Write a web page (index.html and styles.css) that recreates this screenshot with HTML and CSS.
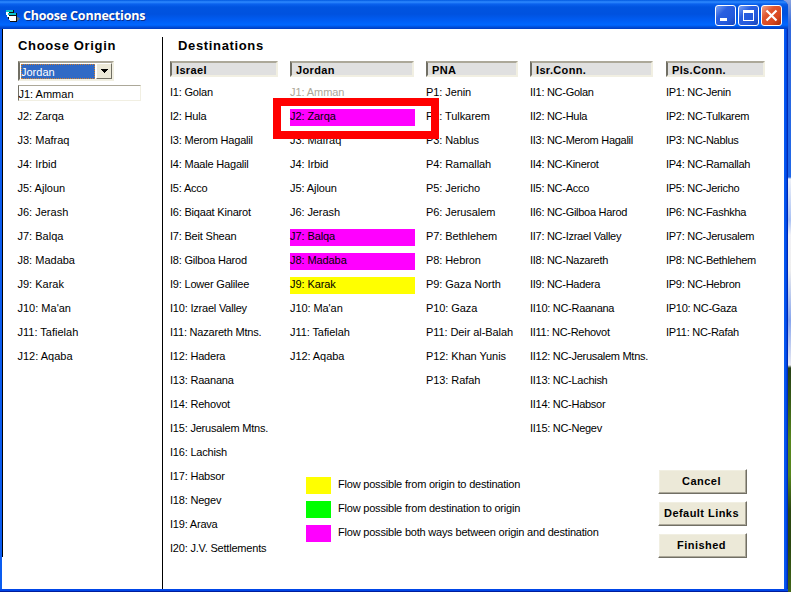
FILE: index.html
```html
<!DOCTYPE html>
<html lang="en">
<head>
<meta charset="utf-8">
<title>Choose Connections</title>
<link rel="stylesheet" href="styles.css">
</head>
<body>
<div class="window">
  <header class="titlebar">
    <svg class="app-icon" width="14" height="14" viewBox="0 0 14 14">
      <path d="M10 7l4 2.500-3 3z" fill="#66727c"/>
      <g shape-rendering="crispEdges">
      <path d="M0 1h8v9H2z" fill="#111"/>
      <path d="M0 1h7v2H0z" fill="#0bc4cc"/>
      <path d="M0 3h3v5H1z" fill="#fff"/>
      <path d="M2 4h9v9H4z" fill="#111"/>
      <path d="M2 4h8v2H2z" fill="#0bc4cc"/>
      <path d="M2 7h8v5H4z" fill="#fff"/>
      </g>
    </svg>
    <h1 class="caption">Choose Connections</h1>
    <div class="controls">
      <button class="ctl" aria-label="Minimize"><svg width="21" height="21" viewBox="0 0 21 21"><path d="M5 13h7v3H5z" fill="#fff"/></svg></button>
      <button class="ctl" aria-label="Maximize"><svg width="21" height="21" viewBox="0 0 21 21"><path fill-rule="evenodd" d="M5 5h11v11H5zM6 8v7h9V8z" fill="#fff"/></svg></button>
      <button class="ctl close" aria-label="Close"><svg width="21" height="21" viewBox="0 0 21 21"><path d="M5.500 5.500l10 10M15.500 5.500l-10 10" stroke="#fff" stroke-width="2.200"/></svg></button>
    </div>
  </header>
  <main class="client">
    <section class="origin">
      <h2 class="heading">Choose Origin</h2>
      <div class="combo"><span class="combo-value">Jordan</span><span class="combo-button"><svg width="7" height="4" viewBox="0 0 7 4" shape-rendering="crispEdges"><path d="M0 0h7L3.500 4z"/></svg></span></div>
      <ul class="list">
        <li class="current">J1: Amman</li><li>J2: Zarqa</li><li>J3: Mafraq</li><li>J4: Irbid</li><li>J5: Ajloun</li><li>J6: Jerash</li><li>J7: Balqa</li><li>J8: Madaba</li><li>J9: Karak</li><li>J10: Ma'an</li><li>J11: Tafielah</li><li>J12: Aqaba</li>
      </ul>
    </section>
    <section class="destinations">
      <h2 class="heading">Destinations</h2>
      <div class="board">
        <div class="column israel">
          <h3 class="head">Israel</h3>
          <ul class="list"><li>I1: Golan</li><li>I2: Hula</li><li>I3: Merom Hagalil</li><li>I4: Maale Hagalil</li><li>I5: Acco</li><li>I6: Biqaat Kinarot</li><li>I7: Beit Shean</li><li>I8: Gilboa Harod</li><li>I9: Lower Galilee</li><li>I10: Izrael Valley</li><li>I11: Nazareth Mtns.</li><li>I12: Hadera</li><li>I13: Raanana</li><li>I14: Rehovot</li><li>I15: Jerusalem Mtns.</li><li>I16: Lachish</li><li>I17: Habsor</li><li>I18: Negev</li><li>I19: Arava</li><li>I20: J.V. Settlements</li></ul>
        </div>
        <div class="column jordan">
          <h3 class="head">Jordan</h3>
          <ul class="list"><li class="disabled">J1: Amman</li><li class="both marked">J2: Zarqa</li><li>J3: Mafraq</li><li>J4: Irbid</li><li>J5: Ajloun</li><li>J6: Jerash</li><li class="both">J7: Balqa</li><li class="both">J8: Madaba</li><li class="outward">J9: Karak</li><li>J10: Ma'an</li><li>J11: Tafielah</li><li>J12: Aqaba</li></ul>
        </div>
        <div class="column">
          <h3 class="head">PNA</h3>
          <ul class="list"><li>P1: Jenin</li><li>P2: Tulkarem</li><li>P3: Nablus</li><li>P4: Ramallah</li><li>P5: Jericho</li><li>P6: Jerusalem</li><li>P7: Bethlehem</li><li>P8: Hebron</li><li>P9: Gaza North</li><li>P10: Gaza</li><li>P11: Deir al-Balah</li><li>P12: Khan Yunis</li><li>P13: Rafah</li></ul>
        </div>
        <div class="column connections">
          <h3 class="head">Isr.Conn.</h3>
          <ul class="list"><li>II1: NC-Golan</li><li>II2: NC-Hula</li><li>II3: NC-Merom Hagalil</li><li>II4: NC-Kinerot</li><li>II5: NC-Acco</li><li>II6: NC-Gilboa Harod</li><li>II7: NC-Izrael Valley</li><li>II8: NC-Nazareth</li><li>II9: NC-Hadera</li><li>II10: NC-Raanana</li><li>II11: NC-Rehovot</li><li>II12: NC-Jerusalem Mtns.</li><li>II13: NC-Lachish</li><li>II14: NC-Habsor</li><li>II15: NC-Negev</li></ul>
        </div>
        <div class="column connections">
          <h3 class="head">Pls.Conn.</h3>
          <ul class="list"><li>IP1: NC-Jenin</li><li>IP2: NC-Tulkarem</li><li>IP3: NC-Nablus</li><li>IP4: NC-Ramallah</li><li>IP5: NC-Jericho</li><li>IP6: NC-Fashkha</li><li>IP7: NC-Jerusalem</li><li>IP8: NC-Bethlehem</li><li>IP9: NC-Hebron</li><li>IP10: NC-Gaza</li><li>IP11: NC-Rafah</li></ul>
        </div>
        <ul class="legend">
          <li><i class="swatch outward"></i>Flow possible from origin to destination</li>
          <li><i class="swatch inward"></i>Flow possible from destination to origin</li>
          <li><i class="swatch both"></i>Flow possible both ways between origin and destination</li>
        </ul>
        <div class="actions"><button>Cancel</button><button>Default Links</button><button>Finished</button></div>
      </div>
    </section>
  </main>
</div>
</body>
</html>
```

FILE: styles.css
```css
*, *::after { box-sizing: border-box; }
body {
  margin: 0;
  height: 592px;
  overflow: hidden;
  font: 11px/14px "Liberation Sans", Arial, sans-serif;
  color: #000;
  background: linear-gradient(#8ba4df 0, #3268dc 25px, #1f67e8 177px, #eef1f8 179px, #a9c1f4 220px, #f1f1f6 235px, #eee 270px, #87a5ed 320px, #e9e9f2 365px, #263f16 368px, #365a15 400px, #56851c 440px, #56851c 475px, #2b4710 510px, #2b4710 545px, #426619 592px);
}
h1, h2, h3, ul { margin: 0; padding: 0; font-size: inherit; }
ul { list-style: none; }
button { font: inherit; color: inherit; padding: 0; }

.window {
  width: 788px;
  height: 592px;
  padding: 0 4px 3px 2px;
  border-radius: 0 7px 0 0;
  background: linear-gradient(90deg, #0a5cf0 0, #0a5cf0 784px, #0050f0 786px, #001ea0 788px);
  box-shadow: inset 0 -1px #001c9c, inset 0 -3px #0046e8;
}
.titlebar {
  display: flex;
  align-items: center;
  height: 29px;
  margin: 0 -4px 0 -2px;
  padding: 2px 6px 0 6px;
  border-radius: 0 7px 0 0;
  background: linear-gradient(#0058e0 0, #2f8aff 2px, #0a62ee 4px, #0054e0 7px, #0052df 14px, #005cf2 20px, #0067ff 25px, #0050dc 27px, #003cc0 29px);
}
.caption {
  margin-left: 3px;
  color: #fff;
  font: bold 12.5px/16px "Open Sans", sans-serif;
  letter-spacing: -.2px;
  text-shadow: 1px 1px #0a2f8c;
  white-space: nowrap;
}
.controls { display: flex; gap: 2px; margin-left: auto; }
.ctl {
  width: 21px;
  height: 21px;
  border: 1px solid #fff;
  border-radius: 3px;
  background: linear-gradient(135deg, #7ba2f4, #2a5fe0 35%, #2459dc 70%, #1845b8);
}
.ctl svg { display: block; margin: -1px; }
.ctl.close { background: linear-gradient(135deg, #f0a48c, #e0562f 35%, #d84820 70%, #a82c08); }

.client {
  display: flex;
  height: 560px;
  background: linear-gradient(#000, #000) 0 0 / 1px 528px no-repeat #fff;
}
.heading {
  height: 32px;
  padding-top: 9px;
  font: bold 13px/16px "Liberation Sans", Arial, sans-serif;
  letter-spacing: .65px;
}
.origin { width: 160px; padding-left: 16px; }
.destinations {
  flex: 1;
  padding-left: 7px;
  background: linear-gradient(#000, #000) 0 8px / 1px 552px no-repeat;
}
.destinations .heading { padding-left: 9px; }

.combo {
  display: flex;
  width: 96px;
  height: 20px;
  border: 2px solid;
  border-color: #aca899 #f1efe2 #f1efe2 #716f64;
}
.combo-value {
  flex: 1;
  margin: 1px 1px 0;
  outline: 1px dotted #d08030;
  outline-offset: -1px;
  color: #fff;
  background: #316ac5;
  line-height: 16px;
}
.combo-button {
  display: grid;
  place-items: center;
  width: 16px;
  background: #ece9d8;
  border: 1px solid;
  border-color: #fff #716f64 #716f64 #fff;
}

.list { display: grid; gap: 7px; letter-spacing: -.08px; }
.israel .list { letter-spacing: -.2px; }
.connections .list { letter-spacing: -.28px; }
.list li { height: 17px; white-space: nowrap; }
.origin .list { margin-top: 4px; letter-spacing: 0; }
.origin .list li { text-indent: -.5px; }
.origin .list .current {
  width: 123px;
  height: 16px;
  margin-bottom: 1px;
  padding-top: 1px;
  border: 1px solid;
  border-color: #aca899 #f1efe2 #f1efe2 #716f64;
}

.board {
  display: grid;
  grid-template: 408px 112px / 108px 124px 92px 123px 100px;
  column-gap: 12px;
  margin-left: 1px;
}
.column:nth-child(5) { margin-left: 1px; }
.israel { grid-row: 1 / 3; }
.head {
  height: 16px;
  margin-bottom: 8px;
  padding-left: 4px;
  border: 2px solid;
  border-color: #aca899 #f1efe2 #f1efe2 #716f64;
  background: #e0e0e0;
  font: bold 11px/14px "Liberation Sans", Arial, sans-serif;
  letter-spacing: .35px;
}
.jordan .list { width: 125px; }
.disabled { color: #aca899; }
.both { background: #f0f; }
.outward { background: #ff0; }
.inward { background: #0f0; }
.marked { position: relative; }
.marked::after {
  content: "";
  position: absolute;
  left: -17px;
  top: -11px;
  width: 166px;
  height: 41px;
  border: 8px solid #f00;
}

.legend {
  grid-column: 2 / 5;
  grid-row: 2;
  display: grid;
  gap: 7px;
  align-content: start;
  padding: 8px 0 0 16px;
  letter-spacing: -.2px;
}
.legend li { display: flex; height: 17px; white-space: nowrap; }
.swatch { width: 25px; height: 17px; margin-right: 7px; }
.actions {
  grid-column: 5;
  grid-row: 2;
  display: grid;
  gap: 7px;
  align-content: start;
  width: 89px;
  margin-left: -7px;
}
.actions button {
  height: 25px;
  padding: 0 2px 2px 0;
  border: 1px solid;
  border-color: #fff #716f64 #716f64 #fff;
  box-shadow: inset -1px -1px #aca899, inset 1px 1px #f1efe2;
  background: #ece9d8;
  font: bold 11px/14px "Liberation Sans", Arial, sans-serif;
  letter-spacing: .45px;
  white-space: nowrap;
}
```
